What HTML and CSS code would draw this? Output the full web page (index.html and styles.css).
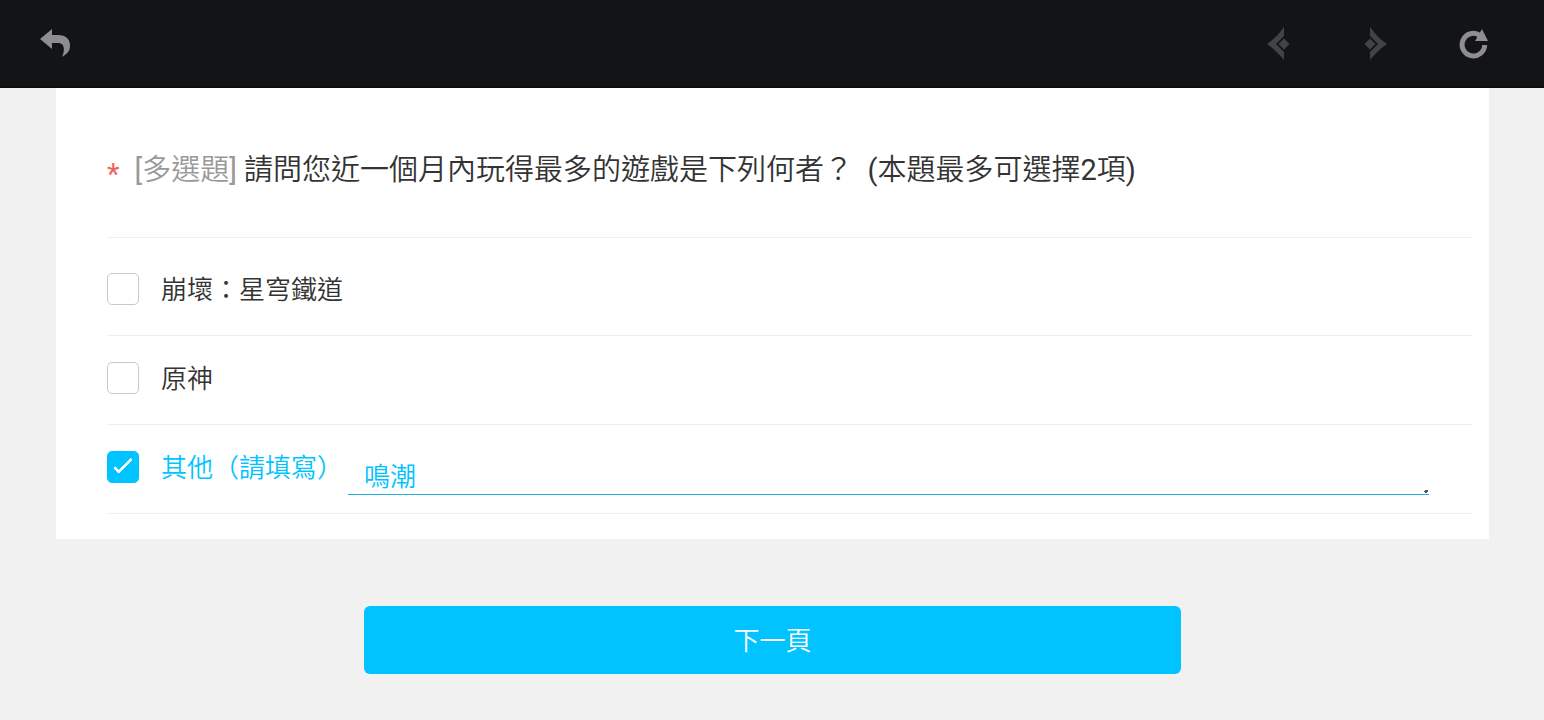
FILE: index.html
```html
<!DOCTYPE html>
<html lang="zh-Hant">
  <head>
    <meta charset="utf-8" />
    <meta name="viewport" content="width=device-width, initial-scale=1" />
    <title>問卷調查</title>
    <link rel="stylesheet" href="styles.css">
  </head>
  <body>
    <header class="toolbar">
      <button class="tool" type="button" aria-label="返回">
        <svg width="32" height="32" viewBox="0 0 32 32">
          <path fill="#8e8e90" d="M1 11 13 1v6h6c8 0 12 4 12 11 0 5-3 8-8 11 3-6 3-14-4-14h-6v6z" />
        </svg>
      </button>
      <nav class="history">
        <button class="tool" type="button" aria-label="上一頁" disabled>
          <svg width="24" height="34" viewBox="0 0 24 34">
            <path fill="#424345" d="M17 0v9l-8 8 8 8v8C12 27 6 21 0 17 6 13 12 7 17 0z" />
            <path fill="#424345" d="m17 11.500 5.500 5.500-5.500 5.500-5.500-5.500z" />
          </svg>
        </button>
        <button class="tool" type="button" aria-label="下一頁" disabled>
          <svg width="24" height="34" viewBox="0 0 24 34">
            <path fill="#424345" d="M7 0v9l8 8-8 8v8c5-6 11-12 17-16C18 13 12 7 7 0z" />
            <path fill="#424345" d="m7 11.500-5.500 5.500 5.500 5.500 5.500-5.500z" />
          </svg>
        </button>
        <button class="tool" type="button" aria-label="重新整理">
          <svg width="30" height="32" viewBox="0 0 30 32">
            <path fill="none" stroke="#8e8e90" stroke-width="5" d="M21 7.500A11.300 11.300 0 1 0 25.700 17" />
            <path fill="#8e8e90" d="m23 1 6 12H16z" />
          </svg>
        </button>
      </nav>
    </header>

    <form class="survey">
      <main class="card">
        <h1 class="question">
          <span class="required">*</span>
          <span><span class="type">[多選題]</span> 請問您近一個月內玩得最多的遊戲是下列何者？&nbsp; (本題最多可選擇2項)</span>
        </h1>
        <ul class="options">
          <li class="option">
            <input type="checkbox" id="game-1" />
            <label for="game-1">崩壞：星穹鐵道</label>
          </li>
          <li class="option">
            <input type="checkbox" id="game-2" />
            <label for="game-2">原神</label>
          </li>
          <li class="option selected">
            <input type="checkbox" id="game-3" checked />
            <label for="game-3">其他（請填寫）</label>
            <div class="other">
              <textarea rows="1" aria-label="其他遊戲">鳴潮</textarea>
              <svg class="grip" width="4" height="4" viewBox="0 0 4 4">
                <path fill="#555" d="M1 0h3v2H3v1H1V2H0V1h1z" />
              </svg>
            </div>
          </li>
        </ul>
      </main>
      <button class="next" type="button">下一頁</button>
    </form>
  </body>
</html>
```

FILE: styles.css
```css
* {
  box-sizing: border-box;
}

body {
  margin: 0;
  background: #f1f1f1;
  color: #333;
  font-family: Roboto, "Noto Sans CJK TC DemiLight", "Noto Sans CJK TC", sans-serif;
}

button,
textarea {
  font-family: inherit;
}

/* toolbar */
.toolbar {
  display: flex;
  justify-content: space-between;
  align-items: center;
  height: 88px;
  padding: 2px 55px 0 39px;
  background: #121416;
  border-bottom: 2px solid #0c0c0f;
}

.history {
  display: flex;
  align-items: center;
  gap: 72px;
}

.tool {
  display: flex;
  padding: 0;
  border: none;
  background: none;
}

/* question card */
.survey {
  padding: 0 55px 46px 56px;
}

.card {
  padding: 62px 17px 25px 51px;
  background: #fff;
}

.question {
  display: flex;
  gap: 15px;
  margin: 0;
  padding-bottom: 42px;
  border-bottom: 1px solid #eee;
  font-size: 29px;
  font-weight: 400;
  line-height: 41px;
}

.required {
  padding-top: 4px;
  color: #f0625d;
}

.type {
  color: #999;
}

.options {
  margin: 0;
  padding: 9px 0 0;
  list-style: none;
}

.option {
  display: flex;
  align-items: center;
  height: 89px;
  padding-bottom: 4px;
  border-bottom: 1px solid #eee;
  font-size: 26px;
  font-weight: 350;
}

.option label {
  padding-bottom: 4px;
}

.option input {
  appearance: none;
  flex: none;
  width: 32px;
  height: 32px;
  margin: 0 22px 0 0;
  border: 1px solid #c8c8c8;
  border-radius: 5px;
  background: #fff;
}

.option input:checked {
  display: grid;
  justify-content: center;
  border-color: #00c3ff;
  background: #00c3ff;
}

.option input:checked::before {
  content: "";
  width: 5px;
  height: 17px;
  margin-top: 2px;
  border: solid #fff;
  border-width: 0 3px 3px 0;
  border-radius: 1px;
  transform: rotate(45deg);
}

.selected {
  color: #00c3ff;
}

.other {
  position: relative;
  flex: 1;
  align-self: flex-end;
  margin: 0 43px 14px 5px;
}

.other textarea {
  display: block;
  width: 100%;
  height: 40px;
  padding: 0 16px;
  border: none;
  border-bottom: 1px solid #1cb2dc;
  outline: none;
  overflow: hidden;
  resize: none;
  background: none;
  color: inherit;
  font-size: 26px;
  font-weight: inherit;
  line-height: 44px;
}

.grip {
  position: absolute;
  right: 1px;
  bottom: 1px;
}

.next {
  display: block;
  width: 57%;
  min-width: 240px;
  height: 68px;
  margin: 67px auto 0;
  padding: 0 0 4px;
  border: none;
  border-radius: 6px;
  background: #00c3ff;
  color: #fff;
  font-size: 26px;
  font-weight: 350;
}
```
